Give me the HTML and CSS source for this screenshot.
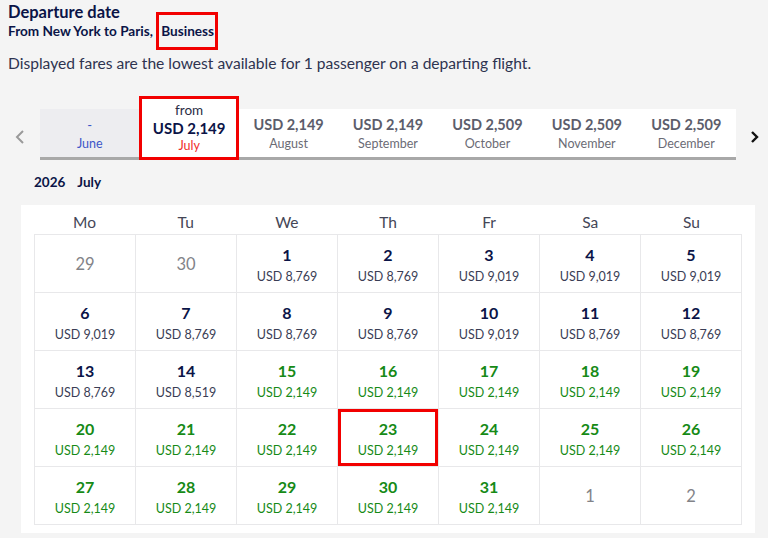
FILE: index.html
```html
<!DOCTYPE html>
<html>
<head>
<title>Departure date</title>
<link rel="stylesheet" href="styles.css">
</head>
<body>
<div class="intro">
  <h1 class="title">Departure date</h1>
  <div class="route">From New York to Paris, <span class="mark">Business</span></div>
  <p class="note">Displayed fares are the lowest available for 1 passenger on a departing flight.</p>
</div>

<div class="months">
  <div class="arrow prev">
    <svg width="10" height="14" viewBox="0 0 10 14"><polyline points="8,1 2,7 8,13" fill="none" stroke="#9a9a9a" stroke-width="2"/></svg>
  </div>
  <div class="strip">
    <div class="tab past"><span class="price">-</span><span class="mname">June</span></div>
    <div class="tab current"><span class="from">from</span><span class="price">USD 2,149</span><span class="mname">July</span></div>
    <div class="tab"><span class="price">USD 2,149</span><span class="mname">August</span></div>
    <div class="tab"><span class="price">USD 2,149</span><span class="mname">September</span></div>
    <div class="tab"><span class="price">USD 2,509</span><span class="mname">October</span></div>
    <div class="tab"><span class="price">USD 2,509</span><span class="mname">November</span></div>
    <div class="tab"><span class="price">USD 2,509</span><span class="mname">December</span></div>
  </div>
  <div class="arrow next">
    <svg width="10" height="14" viewBox="0 0 10 14"><polyline points="2,2 7,7 2,12" fill="none" stroke="#111" stroke-width="2.4"/></svg>
  </div>
</div>

<div class="monthhead"><span>2026</span><span>July</span></div>

<div class="calendar">
  <div class="weekdays">
    <div>Mo</div><div>Tu</div><div>We</div><div>Th</div><div>Fr</div><div>Sa</div><div>Su</div>
  </div>
  <div class="days">
    <div class="day off">29</div>
    <div class="day off">30</div>
    <div class="day"><b>1</b><span>USD 8,769</span></div>
    <div class="day"><b>2</b><span>USD 8,769</span></div>
    <div class="day"><b>3</b><span>USD 9,019</span></div>
    <div class="day"><b>4</b><span>USD 9,019</span></div>
    <div class="day"><b>5</b><span>USD 9,019</span></div>

    <div class="day"><b>6</b><span>USD 9,019</span></div>
    <div class="day"><b>7</b><span>USD 8,769</span></div>
    <div class="day"><b>8</b><span>USD 8,769</span></div>
    <div class="day"><b>9</b><span>USD 8,769</span></div>
    <div class="day"><b>10</b><span>USD 9,019</span></div>
    <div class="day"><b>11</b><span>USD 8,769</span></div>
    <div class="day"><b>12</b><span>USD 8,769</span></div>

    <div class="day"><b>13</b><span>USD 8,769</span></div>
    <div class="day"><b>14</b><span>USD 8,519</span></div>
    <div class="day low"><b>15</b><span>USD 2,149</span></div>
    <div class="day low"><b>16</b><span>USD 2,149</span></div>
    <div class="day low"><b>17</b><span>USD 2,149</span></div>
    <div class="day low"><b>18</b><span>USD 2,149</span></div>
    <div class="day low"><b>19</b><span>USD 2,149</span></div>

    <div class="day low"><b>20</b><span>USD 2,149</span></div>
    <div class="day low"><b>21</b><span>USD 2,149</span></div>
    <div class="day low"><b>22</b><span>USD 2,149</span></div>
    <div class="day low picked"><b>23</b><span>USD 2,149</span></div>
    <div class="day low"><b>24</b><span>USD 2,149</span></div>
    <div class="day low"><b>25</b><span>USD 2,149</span></div>
    <div class="day low"><b>26</b><span>USD 2,149</span></div>

    <div class="day low"><b>27</b><span>USD 2,149</span></div>
    <div class="day low"><b>28</b><span>USD 2,149</span></div>
    <div class="day low"><b>29</b><span>USD 2,149</span></div>
    <div class="day low"><b>30</b><span>USD 2,149</span></div>
    <div class="day low"><b>31</b><span>USD 2,149</span></div>
    <div class="day off">1</div>
    <div class="day off">2</div>
  </div>
</div>
</body>
</html>
```

FILE: styles.css
```css
body {
  margin: 0;
  background: #f4f4f4;
  font-family: Lato, "Open Sans", sans-serif;
  color: #0b1447;
}

.intro { padding: 3px 8px 0; }
.title { margin: 0; font-size: 16.5px; font-weight: 700; line-height: 19px; }
.route { font-size: 13.6px; font-weight: 700; line-height: 18px; margin-top: 0; }
.mark { border: 3px solid #f20000; padding: 8px 1px 8px 2px; }
.note { margin: 14px 0 0; font-size: 15.6px; line-height: 18px; color: #2e3350; }

/* month selector */
.months {
  display: flex;
  align-items: center;
  margin-top: 37px;
}
.arrow { display: flex; justify-content: center; align-self: center; padding-top: 4px; }
.arrow.prev { width: 40px; }
.arrow.next { width: 32px; padding-left: 6px; box-sizing: border-box; }
.strip {
  flex: 1;
  display: grid;
  grid-template-columns: repeat(7, minmax(0, 1fr));
  background: #fff;
  height: 48px;
  border-bottom: 3px solid #a8a8a8;
}
.tab {
  display: flex;
  flex-direction: column;
  align-items: center;
  justify-content: center;
  padding-top: 2px;
}
.tab .price { font-size: 14.5px; font-weight: 700; color: #5c5d6b; line-height: 18px; }
.tab .mname { font-size: 12.5px; color: #6b6b75; line-height: 16px; margin-top: 2px; }
.tab.past { background: #ededf0; }
.tab.past .price, .tab.past .mname { color: #3d57c8; font-weight: 400; }
.tab.past .price { font-size: 13px; }
.tab.current {
  background: #fff;
  margin-top: -13px;
  margin-bottom: -3px;
  border: 3px solid #f20000;
  padding-top: 0;
}
.tab.current .from { font-size: 13.5px; line-height: 16px; color: #2a2d45; }
.tab.current .price { color: #0b1447; font-size: 15px; line-height: 20px; }
.tab.current .mname { color: #ef2b2b; margin-top: 0; }

.monthhead {
  display: flex;
  gap: 12px;
  font-size: 13.5px;
  font-weight: 700;
  padding: 14px 0 0 34px;
  line-height: 16px;
}

/* calendar */
.calendar {
  background: #fff;
  margin: 15px 13px 0 21px;
  padding: 0 13px 8px;
}
.weekdays {
  display: grid;
  grid-template-columns: repeat(7, 1fr);
  text-align: center;
  font-size: 15.5px;
  color: #444656;
  padding-top: 5px;
  line-height: 24px;
}
.days {
  display: grid;
  grid-template-columns: repeat(7, 1fr);
  border-top: 1px solid #e8e8ea;
  border-left: 1px solid #e8e8ea;
}
.day {
  height: 57px;
  box-sizing: border-box;
  padding-top: 11px;
  border-right: 1px solid #e8e8ea;
  border-bottom: 1px solid #e8e8ea;
  display: flex;
  flex-direction: column;
  align-items: center;
  gap: 5px;
  height: 58px;
}
.day b { font-size: 16px; line-height: 18px; color: #0b1447; }
.day span { font-size: 12.5px; line-height: 16px; color: #3a3d55; }
.day.off { font-size: 16.5px; color: #828388; padding-top: 0; justify-content: center; }
.day.low b, .day.low span { color: #168a16; }
.day.picked { box-shadow: inset 0 0 0 3px #f20000; }
```
